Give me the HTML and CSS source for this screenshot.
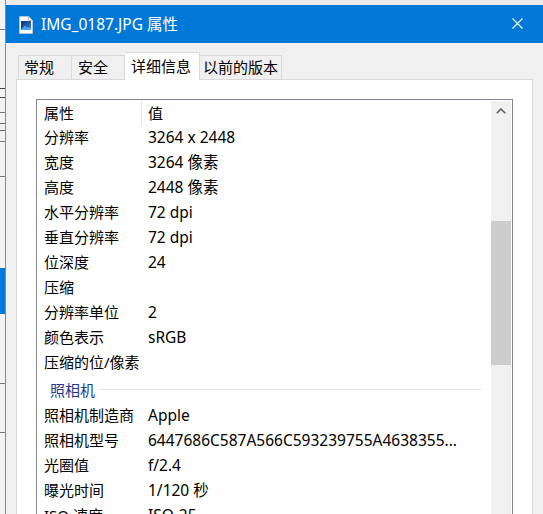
FILE: index.html
```html
<!DOCTYPE html>
<html lang="zh-CN">
<head>
<meta charset="utf-8">
<title>IMG_0187.JPG 属性</title>
<link rel="stylesheet" href="styles.css">
</head>
<body>
<div class="screen">
  <div class="behind">
    <div class="bh-gap g29"></div>
    <div class="bh-line"></div>
    <div class="bh-gap g58"></div>
    <div class="bh-mark"></div>
    <div class="bh-gap g14"></div>
    <div class="bh-line"></div>
    <div class="bh-gap g10"></div>
    <div class="bh-mark small"></div>
    <div class="bh-gap g10"></div>
    <div class="bh-line"></div>
    <div class="bh-gap g34"></div>
    <div class="bh-line"></div>
    <div class="bh-gap g91"></div>
    <div class="bh-sel"></div>
    <div class="bh-gap g69"></div>
    <div class="bh-line"></div>
    <div class="bh-gap g48"></div>
    <div class="bh-line"></div>
  </div>
  <div class="dialog">
    <div class="titlebar">
      <svg class="ficon" width="14" height="18" viewBox="0 0 14 18">
        <defs>
          <linearGradient id="pic" x1="0" y1="0" x2="1" y2="1">
            <stop offset="0" stop-color="#0e2a6e"/>
            <stop offset="1" stop-color="#2f8ee0"/>
          </linearGradient>
        </defs>
        <path d="M0.5 0.5 H9.5 L13.5 4.5 V17.5 H0.5 Z" fill="#ffffff" stroke="#b8c4d4"/>
        <path d="M9.5 0.5 V4.5 H13.5" fill="#e8eef6" stroke="#b8c4d4"/>
        <rect x="2" y="5" width="10" height="9" fill="url(#pic)"/>
        <path d="M2 14 L6 9.5 L8.5 12 L10 10.5 L12 13 V14 Z" fill="#4aa6f0"/>
      </svg>
      <span class="title">IMG_0187.JPG 属性</span>
      <svg class="close" width="11" height="11" viewBox="0 0 11 11">
        <path d="M0.5 0.5 L10.5 10.5 M10.5 0.5 L0.5 10.5" stroke="#ffffff" stroke-width="1.1"/>
      </svg>
    </div>
    <div class="client">
      <div class="tabs">
        <div class="tab t1">常规</div>
        <div class="tab t2">安全</div>
        <div class="tab t3 sel">详细信息</div>
        <div class="tab t4">以前的版本</div>
      </div>
      <div class="panel">
        <div class="list">
          <div class="list-body">
            <div class="hdr"><div class="hc1">属性</div><div class="hsep"></div><div class="hc2">值</div></div>
            <div class="row"><div class="c1">分辨率</div><div class="c2">3264 x 2448</div></div>
            <div class="row"><div class="c1">宽度</div><div class="c2">3264 像素</div></div>
            <div class="row"><div class="c1">高度</div><div class="c2">2448 像素</div></div>
            <div class="row"><div class="c1">水平分辨率</div><div class="c2">72 dpi</div></div>
            <div class="row"><div class="c1">垂直分辨率</div><div class="c2">72 dpi</div></div>
            <div class="row"><div class="c1">位深度</div><div class="c2">24</div></div>
            <div class="row"><div class="c1">压缩</div><div class="c2"></div></div>
            <div class="row"><div class="c1">分辨率单位</div><div class="c2">2</div></div>
            <div class="row"><div class="c1">颜色表示</div><div class="c2">sRGB</div></div>
            <div class="row"><div class="c1">压缩的位/像素</div><div class="c2"></div></div>
            <div class="group"><span class="gname">照相机</span><span class="gline"></span></div>
            <div class="row"><div class="c1">照相机制造商</div><div class="c2">Apple</div></div>
            <div class="row"><div class="c1">照相机型号</div><div class="c2">6447686C587A566C593239755A4638355...</div></div>
            <div class="row"><div class="c1">光圈值</div><div class="c2">f/2.4</div></div>
            <div class="row"><div class="c1">曝光时间</div><div class="c2">1/120 秒</div></div>
            <div class="row"><div class="c1">ISO 速度</div><div class="c2">ISO-25</div></div>
          </div>
          <div class="scrollbar">
            <div class="sb-arrow">
              <svg width="10" height="6" viewBox="0 0 10 6"><path d="M0.8 5.2 L5 1 L9.2 5.2" fill="none" stroke="#606060" stroke-width="1.6"/></svg>
            </div>
            <div class="sb-gap"></div>
            <div class="sb-thumb"></div>
          </div>
        </div>
      </div>
    </div>
  </div>
</div>
</body>
</html>
```

FILE: styles.css
```css
html, body {
  margin: 0;
  padding: 0;
  background: #ececec;
  overflow: hidden;
}
.screen {
  width: 543px;
  height: 514px;
  display: flex;
  overflow: hidden;
  font-family: "Noto Sans", "Noto Sans CJK SC", sans-serif;
}
.behind {
  width: 5px;
  flex: none;
  background: #f3f3f3;
  border-right: 1px solid #8a8a8a;
  display: flex;
  flex-direction: column;
}
.bh-gap { flex: none; }
.g10 { height: 10px; }
.g14 { height: 14px; }
.g29 { height: 29px; }
.g34 { height: 34px; }
.g48 { height: 48px; }
.g58 { height: 58px; }
.g69 { height: 69px; }
.g91 { height: 91px; }
.bh-line { height: 1px; background: #7a7a7a; flex: none; }
.bh-mark {
  height: 10px;
  flex: none;
  border-top: 1px solid #444;
  border-bottom: 1px solid #444;
  box-sizing: border-box;
}
.bh-mark.small { height: 8px; border-color: #666; }
.bh-sel { height: 46px; background: #0078d7; flex: none; }
.dialog {
  width: 560px;
  flex: none;
  margin-top: 5px;
  display: flex;
  flex-direction: column;
}
.titlebar {
  height: 38px;
  background: #0078d7;
  display: flex;
  align-items: center;
  flex: none;
}
.ficon { margin-left: 13px; margin-top: 1px; }
.title {
  color: #ffffff;
  font-size: 15.5px;
  margin-left: 8px;
  flex: 1;
  margin-top: -1px;
}
.close { margin-right: 43px; margin-top: -1px; }
.client {
  flex: 1;
  background: #f0f0f0;
  padding: 9px 0 0 10px;
}
.tabs {
  display: flex;
  align-items: flex-end;
  height: 27px;
  margin-left: 2px;
  position: relative;
  z-index: 2;
}
.tab {
  box-sizing: border-box;
  height: 24px;
  border: 1px solid #d9d9d9;
  border-bottom: none;
  background: #f0f0f0;
  font-size: 15px;
  line-height: 22px;
  color: #000;
  padding-left: 5px;
}
.t1 { width: 54px; }
.t2 { width: 53px; border-left: none; padding-left: 6px; }
.t3 { width: 75px; }
.t4 { width: 82px; border-left: none; padding-left: 3px; }
.tab.sel {
  height: 28px;
  background: #ffffff;
  margin-bottom: -1px;
  line-height: 26px;
  padding-left: 6px;
  border-left: none;
}
.panel {
  box-sizing: border-box;
  width: 517px;
  height: 460px;
  background: #ffffff;
  border: 1px solid #d9d9d9;
  padding: 19px 0 0 19px;
}
.list {
  box-sizing: border-box;
  width: 477px;
  height: 460px;
  border: 1px solid #828790;
  padding: 1px;
  display: flex;
}
.list-body {
  flex: 1;
  font-size: 15px;
  color: #000;
}
.hdr {
  height: 24px;
  display: flex;
  align-items: stretch;
}
.hc1 {
  width: 97px;
  padding-left: 6px;
  line-height: 24px;
}
.hsep {
  width: 1px;
  background: #e5e5e5;
}
.hc2 {
  padding-left: 6px;
  line-height: 24px;
}
.row {
  height: 25px;
  display: flex;
  line-height: 25px;
  white-space: nowrap;
}
.c1 {
  width: 98px;
  padding-left: 6px;
  flex: none;
}
.c2 {
  padding-left: 6px;
  font-size: 15.5px;
}
.group {
  height: 28px;
  display: flex;
  align-items: center;
  padding-left: 12px;
}
.gname {
  color: #1e3a8f;
  font-size: 15px;
}
.gline {
  flex: 1;
  height: 1px;
  background: #dde1ea;
  margin-left: 5px;
  margin-right: 10px;
}
.scrollbar {
  width: 20px;
  flex: none;
  background: #f0f0f0;
  display: flex;
  flex-direction: column;
}
.sb-arrow {
  height: 20px;
  display: flex;
  align-items: center;
  justify-content: center;
}
.sb-gap { height: 100px; }
.sb-thumb {
  height: 144px;
  background: #cdcdcd;
}
```
